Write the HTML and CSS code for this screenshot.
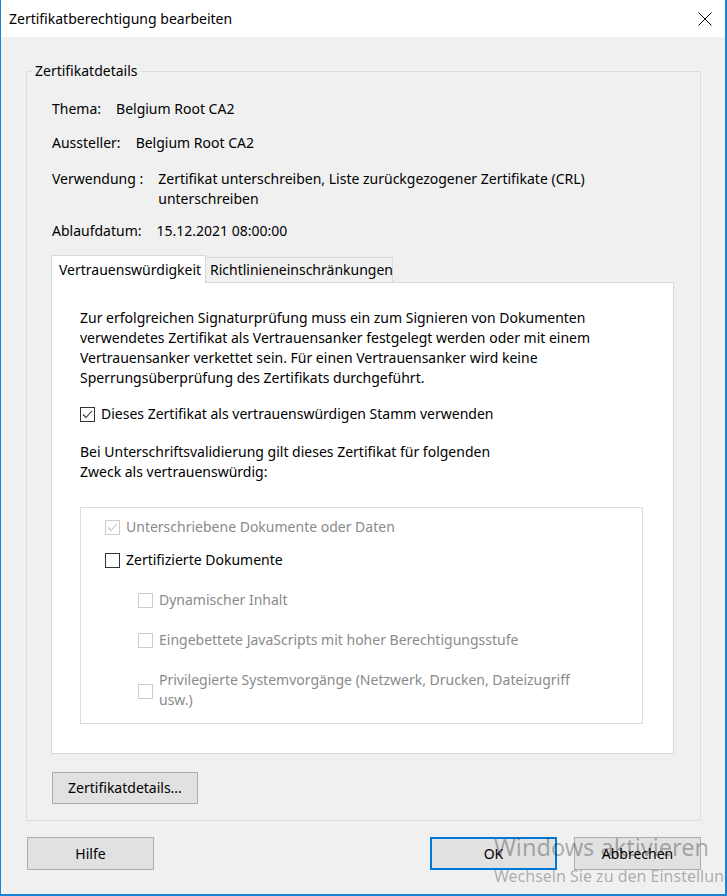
FILE: index.html
```html
<!DOCTYPE html>
<html lang="de">
<head>
<meta charset="utf-8">
<title>Zertifikatberechtigung bearbeiten</title>
<link rel="stylesheet" href="styles.css">
</head>
<body>
<div class="window">
  <div class="titlebar">
    <span class="title">Zertifikatberechtigung bearbeiten</span>
    <svg class="close" width="14" height="14" viewBox="0 0 14 14"><path d="M0.5 0.5 L13.5 13.5 M13.5 0.5 L0.5 13.5" stroke="#000" stroke-width="1" fill="none"/></svg>
  </div>
  <div class="content">
    <fieldset class="group">
      <legend class="legend">Zertifikatdetails</legend>
      <div class="details">
        <div class="row row-thema"><span>Thema:</span><span>Belgium Root CA2</span></div>
        <div class="row row-aus"><span>Aussteller:</span><span>Belgium Root CA2</span></div>
        <div class="row row-verw"><span>Verwendung :</span><span>Zertifikat unterschreiben, Liste zurückgezogener Zertifikate (CRL)<br>unterschreiben</span></div>
        <div class="row row-ablauf"><span>Ablaufdatum:</span><span>15.12.2021 08:00:00</span></div>
      </div>
      <div class="tabs">
        <div class="tab tab-active">Vertrauenswürdigkeit</div>
        <div class="tab tab-inactive">Richtlinieneinschränkungen</div>
      </div>
      <div class="panel">
        <p class="para">Zur erfolgreichen Signaturprüfung muss ein zum Signieren von Dokumenten<br>verwendetes Zertifikat als Vertrauensanker festgelegt werden oder mit einem<br>Vertrauensanker verkettet sein. Für einen Vertrauensanker wird keine<br>Sperrungsüberprüfung des Zertifikats durchgeführt.</p>
        <div class="check check-root">
          <span class="box"><svg width="13" height="13" viewBox="0 0 13 13"><path d="M2 6.5 L5 9.5 L11 3" stroke="#333" stroke-width="1.1" fill="none"/></svg></span>
          <span>Dieses Zertifikat als vertrauenswürdigen Stamm verwenden</span>
        </div>
        <p class="para para2">Bei Unterschriftsvalidierung gilt dieses Zertifikat für folgenden<br>Zweck als vertrauenswürdig:</p>
        <div class="inner">
          <div class="check item item1 disabled">
            <span class="box"><svg width="13" height="13" viewBox="0 0 13 13"><path d="M2 6.5 L5 9.5 L11 3" stroke="#c4c4c4" stroke-width="1.1" fill="none"/></svg></span>
            <span>Unterschriebene Dokumente oder Daten</span>
          </div>
          <div class="check item item2">
            <span class="box"></span>
            <span>Zertifizierte Dokumente</span>
          </div>
          <div class="check item sub item3 disabled">
            <span class="box"></span>
            <span>Dynamischer Inhalt</span>
          </div>
          <div class="check item sub item4 disabled">
            <span class="box"></span>
            <span>Eingebettete JavaScripts mit hoher Berechtigungsstufe</span>
          </div>
          <div class="check item sub item5 disabled">
            <span class="box"></span>
            <span>Privilegierte Systemvorgänge (Netzwerk, Drucken, Dateizugriff<br>usw.)</span>
          </div>
        </div>
      </div>
      <button class="btn btn-details">Zertifikatdetails...</button>
    </fieldset>
    <div class="footer">
      <button class="btn">Hilfe</button>
      <div class="footer-right">
        <button class="btn btn-ok">OK</button>
        <button class="btn">Abbrechen</button>
      </div>
    </div>
  </div>
  <div class="watermark">
    <div class="wm1">Windows aktivieren</div>
    <div class="wm2">Wechseln Sie zu den Einstellungen, um Windows zu aktivieren.</div>
  </div>
</div>
</body>
</html>
```
FILE: styles.css
```css
* { box-sizing: border-box; }
html, body { margin: 0; padding: 0; }
body {
  width: 727px;
  height: 896px;
  overflow: hidden;
  font-family: "Noto Sans", "Liberation Sans", sans-serif;
  font-size: 14px;
  line-height: 20px;
  color: #000;
}
.window {
  position: relative;
  width: 727px;
  height: 896px;
  background: #f0f0f0;
  border-left: 1px solid #1883d7;
  border-right: 2px solid #1883d7;
  border-bottom: 2px solid #1883d7;
  overflow: hidden;
}
.titlebar {
  height: 37px;
  background: #fff;
  display: flex;
  align-items: center;
  justify-content: space-between;
  padding: 0 13px 0 8px;
}
.title { font-size: 14px; }
.close { display: block; width: 14px; height: 14px; }

.content { padding: 24px 24px 0 25px; }

.group {
  margin: 0;
  padding: 0 0 16px 0;
  border: 1px solid #dcdcdc;
  min-width: 0;
}
.legend {
  margin-left: 5px;
  padding: 0 3px;
  line-height: 20px;
}
.details { padding: 18px 0 0 25px; }
.row { display: flex; gap: 15px; }
.row-aus { margin-top: 14px; }
.row-verw { margin-top: 16px; }
.row-ablauf { margin-top: 12px; }

.tabs {
  display: flex;
  align-items: flex-end;
  margin: 14px 0 -1px 24px;
  position: relative;
  z-index: 1;
}
.tab {
  border: 1px solid #d9d9d9;
  border-bottom: none;
  line-height: 20px;
}
.tab-active {
  height: 28px;
  background: #fff;
  padding: 4px 7px 0 7px;
  width: 155px;
}
.tab-inactive {
  height: 25px;
  border-left: none;
  background: #f0f0f0;
  padding: 2px 4px 0 4px;
  margin-bottom: 1px;
  width: 187px;
}
.panel {
  margin: 0 26px 0 24px;
  background: #fff;
  border: 1px solid #d9d9d9;
  padding: 25px 30px 29px 28px;
}
.para { margin: 0; }
.para2 { margin-top: 18px; }

.check { display: flex; align-items: center; gap: 6px; }
.check-root { margin-top: 16px; }
.box {
  flex: none;
  width: 15px;
  height: 15px;
  border: 1px solid #333;
  background: #fff;
  display: flex;
  align-items: center;
  justify-content: center;
}
.box svg { display: block; }
.disabled { color: #8a8a8a; }
.disabled .box { border-color: #cccccc; }

.inner {
  margin-top: 25px;
  border: 1px solid #dcdcdc;
  padding: 9px 10px 13px 24px;
}
.item2 { margin-top: 13px; }
.sub { margin-left: 33px; }
.item3 { margin-top: 20px; }
.item4 { margin-top: 20px; }
.item5 { margin-top: 20px; }
.item5 .box { margin-top: 3px; }

.btn {
  font: inherit;
  color: #000;
  background: #e1e1e1;
  border: 1px solid #adadad;
  height: 33px;
  width: 127px;
  padding: 0;
  margin: 0;
  line-height: 20px;
}
.btn-details {
  display: block;
  width: 146px;
  height: 32px;
  margin: 18px 0 0 25px;
}
.btn-ok { border: 2px solid #0078d7; }

.footer {
  display: flex;
  justify-content: space-between;
  margin-top: 16px;
  padding-left: 1px;
}
.footer-right { display: flex; gap: 17px; }

.watermark {
  position: absolute;
  left: 493px;
  top: 829px;
  white-space: nowrap;
  color: rgba(0, 0, 0, 0.3);
  pointer-events: none;
}
.wm1 { font-size: 23.5px; line-height: 36px; }
.wm2 { font-size: 16px; line-height: 22px; margin-top: 0; }
```
